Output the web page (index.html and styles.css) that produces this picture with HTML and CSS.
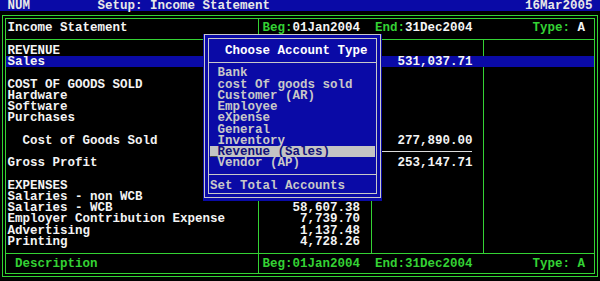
FILE: index.html
```html
<!DOCTYPE html>
<html lang="en">
  <head>
    <meta charset="UTF-8" />
    <meta name="viewport" content="width=device-width, initial-scale=1.0" />
    <title>Setup: Income Statement</title>

    <link rel="stylesheet" href="styles.css">
  </head>
  <body>
    <div class="screen">
      <div class="titlebar">
        <span>NUM</span>
        <span class="caption">Setup: Income Statement</span>
        <span class="today">16Mar2005</span>
      </div>

      <div class="frame">
        <div class="box">
          <div class="head">
            <div class="line">
              <div class="desc">Income Statement</div>
              <div class="beg"><span class="lbl">Beg:</span>01Jan2004</div>
              <div class="end"><span class="lbl">End:</span>31Dec2004</div>
              <div class="type"><span class="lbl">Type:</span> A</div>
            </div>
          </div>

          <div class="body">
            <div class="line"><div class="desc">REVENUE</div></div>
            <div class="line hl"><div class="desc">Sales</div><div class="end amt">531,037.71</div></div>
            <div class="line"></div>
            <div class="line"><div class="desc">COST OF GOODS SOLD</div></div>
            <div class="line"><div class="desc">Hardware</div></div>
            <div class="line"><div class="desc">Software</div></div>
            <div class="line"><div class="desc">Purchases</div></div>
            <div class="line"></div>
            <div class="line"><div class="desc indent">Cost of Goods Sold</div><div class="end amt">277,890.00</div></div>
            <div class="line"><div class="end rule"></div></div>
            <div class="line"><div class="desc">Gross Profit</div><div class="end amt">253,147.71</div></div>
            <div class="line"></div>
            <div class="line"><div class="desc">EXPENSES</div></div>
            <div class="line"><div class="desc">Salaries - non WCB</div></div>
            <div class="line"><div class="desc">Salaries - WCB</div><div class="beg amt">58,607.38</div></div>
            <div class="line"><div class="desc">Employer Contribution Expense</div><div class="beg amt">7,739.70</div></div>
            <div class="line"><div class="desc">Advertising</div><div class="beg amt">1,137.48</div></div>
            <div class="line"><div class="desc">Printing</div><div class="beg amt">4,728.26</div></div>
          </div>

          <div class="foot">
            <div class="line">
              <div class="desc">Description</div>
              <div class="beg">Beg:01Jan2004</div>
              <div class="end">End:31Dec2004</div>
              <div class="type">Type: A</div>
            </div>
          </div>
        </div>
      </div>

      <!-- popup over the report -->
      <div class="dialog">
        <div class="dframe">
          <div class="dinner">
            <div class="dtitle">Choose Account Type</div>
            <ul class="dlist">
              <li>Bank</li>
              <li>cost Of goods sold</li>
              <li>Customer (AR)</li>
              <li>Employee</li>
              <li>eXpense</li>
              <li>General</li>
              <li>Inventory</li>
              <li class="sel"><span class="cursor">_</span>Revenue (Sales)</li>
              <li>Vendor (AP)</li>
            </ul>
            <div class="dfoot">Set Total Accounts</div>
          </div>
        </div>
      </div>
    </div>
  </body>
</html>
```

FILE: styles.css
```css
*,
*::after,
*::before {
  margin: 0;
  padding: 0;
  box-sizing: border-box;
}

:root {
  --row: 11.24px;

  --green: #34d234;
  --blue: #0a0aa6;
  --white: #f4f4f4;
  --grey: #c8c8c8;
  --sel-bg: #c4c4c4;
  --sel-color: #101078;
}

body {
  width: 600px;
  height: 281px;
  overflow: hidden;
  background: #000;
  color: var(--white);
  font-family: "Liberation Mono", "DejaVu Sans Mono", monospace;
  font-size: 12.5px;
  font-weight: bold;
  line-height: var(--row);
}

.screen {
  position: relative;
  width: 600px;
  height: 281px;
}

.titlebar {
  display: flex;
  height: var(--row);
  padding: 1px 7.5px 0;
  background: var(--blue);
  color: #e8e8e8;
}

.titlebar .caption {
  margin-left: 67.5px;
}

.titlebar .today {
  margin-left: auto;
}

/* double green frame */
.frame {
  margin: 3.76px 2px 0;
  border: 1px solid var(--green);
  padding: 2px;
}

.box {
  border: 1px solid var(--green);
}

.line {
  display: grid;
  grid-template-columns: 252.3px 112.5px 112.5px 1fr;
  height: var(--row);
  padding-top: 1px;
}

.head,
.foot {
  background: linear-gradient(var(--green), var(--green)) 252.3px 0 / 1px 100% no-repeat;
}

.head {
  padding: 3.48px 0 5.6px;
  border-bottom: 1px solid var(--green);
}

.body {
  padding: 4.64px 0 5.6px;
  border-bottom: 1px solid var(--green);
  background:
    linear-gradient(var(--green), var(--green)) 252.3px 0 / 1px 100% no-repeat,
    linear-gradient(var(--green), var(--green)) 364.8px 0 / 1px 100% no-repeat,
    linear-gradient(var(--green), var(--green)) 477.3px 0 / 1px 100% no-repeat;
}

.foot {
  padding: 4.6px 0 3.66px;
  color: var(--green);
}

.desc {
  grid-column: 1;
  padding-left: 1.5px;
}

.foot .desc {
  padding-left: 9px;
}

.indent {
  padding-left: 16.5px;
}

.beg {
  grid-column: 2;
  padding-left: 4.2px;
}

.end {
  grid-column: 3;
  padding-left: 4.2px;
}

.type {
  grid-column: 4;
  text-align: right;
  padding-right: 9px;
}

.amt {
  text-align: right;
  padding-left: 0;
  padding-right: 10.8px;
}

.lbl {
  color: var(--green);
}

.hl {
  background: var(--blue);
}

.rule {
  background: linear-gradient(#dcdcdc, #dcdcdc) 0 3.8px / calc(100% - 10.8px) 1px no-repeat;
}

/* account type popup */
.dialog {
  position: absolute;
  left: 203px;
  top: 33.5px;
  width: 179px;
  height: 167px;
  padding: 0.5px 1px 2.5px 0.5px;
  background: var(--blue);
  color: var(--grey);
}

.dframe {
  height: 100%;
  border: 1px solid var(--grey);
  padding: 3px;
}

.dinner {
  height: 100%;
  border: 1px solid var(--grey);
}

.dtitle {
  padding: 7px 0 4.6px 16.5px;
  border-bottom: 1px solid var(--grey);
  color: #fff;
}

.dlist {
  list-style: none;
  padding: 4.6px 0 5.6px;
  border-bottom: 1px solid var(--grey);
}

.dlist li {
  height: var(--row);
  padding: 1px 0 0 9px;
}

.dlist li.sel {
  margin: 0 1px 0 1.5px;
  padding-left: 0;
  background: var(--sel-bg);
  color: var(--sel-color);
}

.cursor {
  color: #000;
}

.dfoot {
  padding: 5.6px 0 0 1.5px;
}
```
